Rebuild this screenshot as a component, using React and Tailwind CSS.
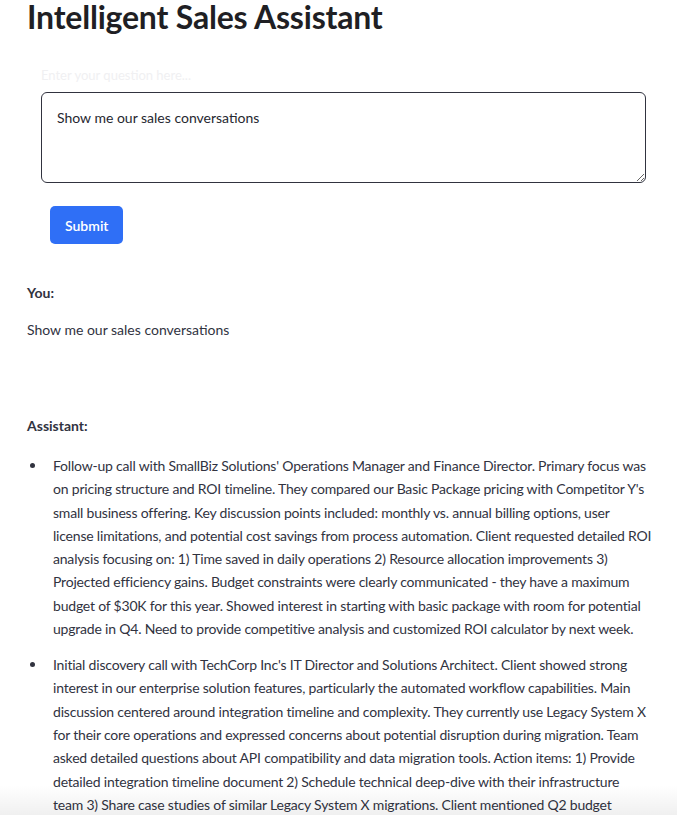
import React, { useState } from "react";

// lines kept as they wrap in the chat panel
const conversations = [
  [
    "Follow-up call with SmallBiz Solutions' Operations Manager and Finance Director. Primary focus was",
    "on pricing structure and ROI timeline. They compared our Basic Package pricing with Competitor Y's",
    "small business offering. Key discussion points included: monthly vs. annual billing options, user",
    "license limitations, and potential cost savings from process automation. Client requested detailed ROI",
    "analysis focusing on: 1) Time saved in daily operations 2) Resource allocation improvements 3)",
    "Projected efficiency gains. Budget constraints were clearly communicated - they have a maximum",
    "budget of $30K for this year. Showed interest in starting with basic package with room for potential",
    "upgrade in Q4. Need to provide competitive analysis and customized ROI calculator by next week.",
  ],
  [
    "Initial discovery call with TechCorp Inc's IT Director and Solutions Architect. Client showed strong",
    "interest in our enterprise solution features, particularly the automated workflow capabilities. Main",
    "discussion centered around integration timeline and complexity. They currently use Legacy System X",
    "for their core operations and expressed concerns about potential disruption during migration. Team",
    "asked detailed questions about API compatibility and data migration tools. Action items: 1) Provide",
    "detailed integration timeline document 2) Schedule technical deep-dive with their infrastructure",
    "team 3) Share case studies of similar Legacy System X migrations. Client mentioned Q2 budget",
    "allocation for digital transformation initiatives. Overall positive reception with clear next steps.",
  ],
];

export default function App() {
  const [question, setQuestion] = useState("Show me our sales conversations");

  return (
    <div className="relative h-[815px] overflow-hidden bg-white text-[#31333f] font-['Lato','Noto_Sans',sans-serif]">
      <div className="pl-[27px] pr-[14px]">
        <h1 className="mt-[-6px] text-[32px] font-bold leading-[46px] tracking-[-0.2px] text-[#1f1f24]">
          Intelligent Sales Assistant
        </h1>

        {/* Question input */}
        <div className="pl-[14px] pt-[25px]">
          <label className="block text-[13px] leading-[20px] text-[#f0f0f2]">
            Enter your question here...
          </label>
          <textarea
            value={question}
            onChange={(e) => setQuestion(e.target.value)}
            className="mt-[7px] block h-[91px] w-[605px] rounded-[6px] border border-[#31333f] px-[15px] py-[15px] text-[14px] leading-[20px] text-[#262730] outline-none"
          />
          <button className="ml-[9px] mt-[23px] h-[38px] rounded-[5px] bg-[#2f6ff6] px-[15px] text-[14px] font-semibold text-white">
            Submit
          </button>
        </div>

        {/* Conversation */}
        <div className="mt-[37px] text-[14px] leading-[24px]">
          <p className="font-bold">You:</p>
          <p className="mt-[13px]">{question}</p>

          <p className="mt-[72px] font-bold">Assistant:</p>
          <ul className="mt-[16px] leading-[23.3px]">
            {conversations.map((lines, i) => (
              <li key={i} className="mb-[12.7px] flex">
                <span className="flex h-[23.3px] w-[26px] shrink-0 items-center pl-[3px]">
                  <span className="h-[5px] w-[5px] rounded-full bg-[#31333f]" />
                </span>
                <span className="tracking-[-0.2px]">
                  {lines.map((line, j) => (
                    <span key={j} className="block whitespace-nowrap">
                      {line}
                    </span>
                  ))}
                </span>
              </li>
            ))}
          </ul>
        </div>
      </div>

      {/* bottom fade */}
      <div className="pointer-events-none absolute inset-x-0 bottom-0 h-[30px] bg-gradient-to-b from-black/0 to-black/[0.06]" />
    </div>
  );
}
